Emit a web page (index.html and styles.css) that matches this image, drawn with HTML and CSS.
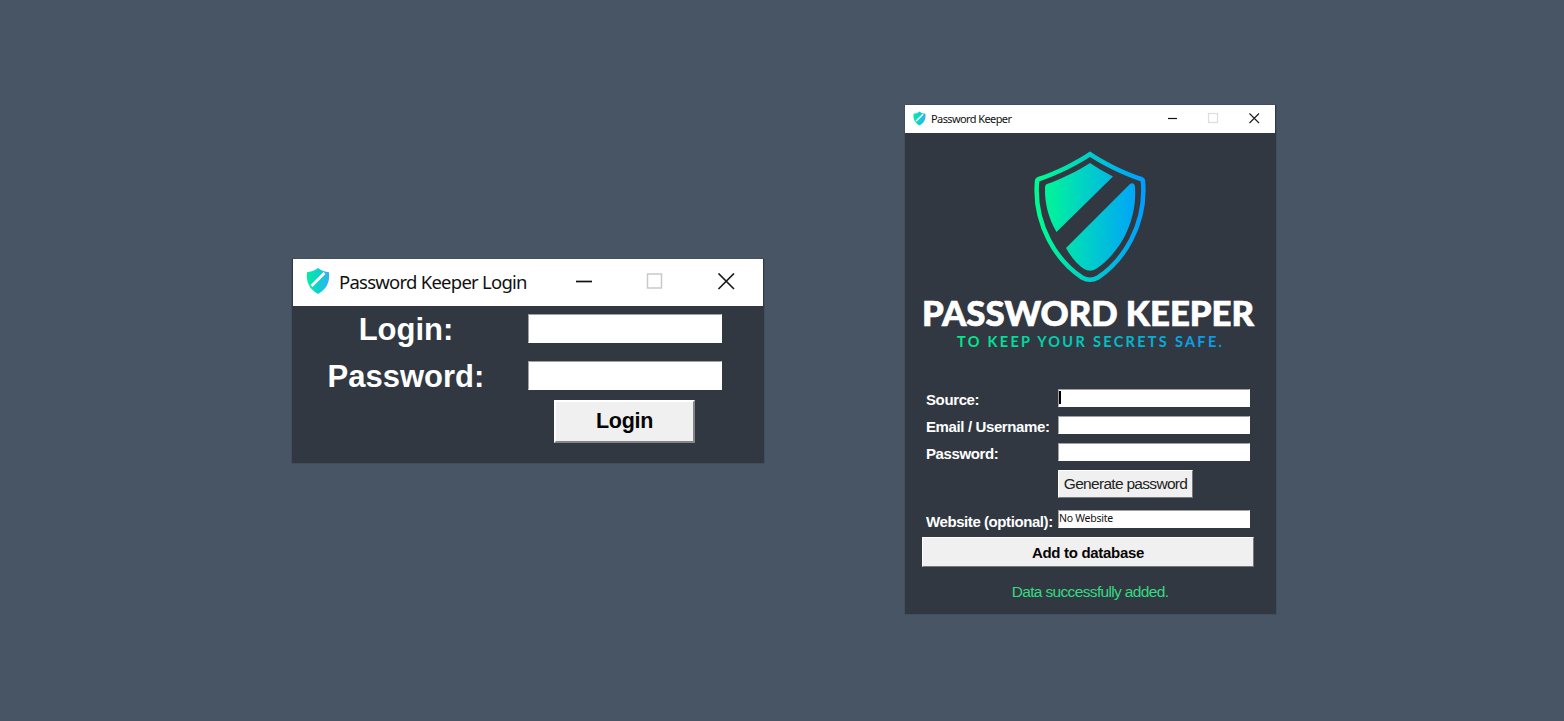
FILE: index.html
```html
<!DOCTYPE html>
<html lang="en">
<head>
<meta charset="utf-8">
<title>Password Keeper</title>
<link rel="stylesheet" href="styles.css">
</head>
<body>
<svg class="defs" width="0" height="0">
  <defs>
    <linearGradient id="brand" gradientUnits="userSpaceOnUse" x1="0" y1="0" x2="112" y2="0"><stop offset=".05" stop-color="#00fa91"/><stop offset=".5" stop-color="#00cdcb"/><stop offset=".97" stop-color="#009fff"/></linearGradient>
    <linearGradient id="tag" gradientUnits="userSpaceOnUse" x1="34" y1="0" x2="300" y2="0"><stop offset="0" stop-color="#00ed83"/><stop offset=".5" stop-color="#00c5bd"/><stop offset="1" stop-color="#0b96f5"/></linearGradient>
    <linearGradient id="miniFill"><stop offset="0" stop-color="#05eda0"/><stop offset=".5" stop-color="#0dd2cc"/><stop offset="1" stop-color="#38aef5"/></linearGradient>
    <symbol id="mini" viewBox="0 0 24 26">
      <path d="M12 0C8.500 2.600 5 4 1 4.300C0 14 3 21 12 26C21 21 24 14 23 4.300C19 4 15.500 2.600 12 0Z" fill="url(#miniFill)"/>
      <path d="M5.500 18L18.500 5" stroke="#fff" stroke-width="2.800"/>
    </symbol>
  </defs>
</svg>

<section class="window login">
  <header class="titlebar">
    <svg class="app-icon"><use href="#mini"/></svg>
    <span class="title">Password Keeper Login</span>
    <svg class="controls" viewBox="0 0 160 18" fill="none">
      <path d="M0 8.500H16" stroke="#111" stroke-width="1.700"/>
      <rect x="71.500" y="1" width="14" height="14" stroke="#c9c9c9" stroke-width="1.500"/>
      <path d="M142.500 .5L158 16M158 .5L142.500 16" stroke="#1c1c1c" stroke-width="1.700"/>
    </svg>
  </header>
  <form class="login-form">
    <span class="label">Login:</span><div class="entry"></div>
    <span class="label">Password:</span><div class="entry"></div>
    <button type="button" class="btn">Login</button>
  </form>
</section>

<section class="window keeper">
  <header class="titlebar">
    <svg class="app-icon"><use href="#mini"/></svg>
    <span class="title">Password Keeper</span>
    <svg class="controls" viewBox="0 0 92 12" fill="none">
      <path d="M0 6.500H9" stroke="#111" stroke-width="1.200"/>
      <rect x="40.500" y="1.500" width="9" height="9" stroke="#ddd" stroke-width="1.200"/>
      <path d="M81.500 1.500L91 11M91 1.500L81.500 11" stroke="#222" stroke-width="1.200"/>
    </svg>
  </header>
  <div class="keeper-body">
    <svg class="shield" viewBox="0 0 112 132">
      <path d="M56 3.200C45 11 22 22.500 5 28C3.500 28.500 3 29 3 31C-.5 74 23 110 48 126.500Q56 131 64 126.500C89 110 112.500 74 109 31C109 29 108.500 28.500 107 28C90 22.500 67 11 56 3.200Z" fill="none" stroke="url(#brand)" stroke-width="4.500"/>
      <path d="M56 12C44 20 26 28.500 13 33Q11 33.500 11 37C10.500 53 15 68 22.500 81L79 25.500C71 21.500 63 16.500 56 12Z" fill="url(#brand)"/>
      <path d="M32 97L96 33C98 31.500 100.500 32.500 101 35.500C103.500 70 86 102 62 118Q56 121.500 50 118C43 113 37 106 32 97Z" fill="url(#brand)"/>
    </svg>
    <svg class="wordmark" viewBox="0 0 334 60">
      <text class="brand-name" x="0" y="33" textLength="332" lengthAdjust="spacingAndGlyphs">PASSWORD KEEPER</text>
      <text class="tagline" x="35" y="53.500" textLength="265">TO KEEP YOUR SECRETS SAFE.</text>
    </svg>
    <form class="keeper-form">
      <span class="label">Source:</span><div class="entry"><i class="caret"></i></div>
      <span class="label">Email / Username:</span><div class="entry"></div>
      <span class="label">Password:</span><div class="entry"></div>
      <button type="button" class="btn generate">Generate password</button>
      <span class="label site">Website (optional):</span><div class="entry site-entry">No Website</div>
      <button type="button" class="btn add">Add to database</button>
    </form>
    <p class="status">Data successfully added.</p>
  </div>
</section>
</body>
</html>
```
FILE: styles.css
```css
* { box-sizing: border-box; }
body { margin: 0; height: 721px; background: #485565; overflow: hidden; position: relative; font-family: "Liberation Sans", Arial, sans-serif; }
.defs { position: absolute; }
.window { position: absolute; background: #313841; box-shadow: 0 0 1px #293039; }
.titlebar { background: #fff; display: flex; align-items: center; }
.title { font-family: "Noto Sans", "Open Sans", sans-serif; color: #111; white-space: nowrap; }
.controls { margin-left: auto; }
.entry { background: #fff; border: 1px solid #fff; border-top-color: #a0a0a0; border-left-color: #a0a0a0; }
.btn { background: #f0f0f0; border: 1px solid #fff; border-right-color: #777; border-bottom-color: #777; padding: 0; margin: 0; border-radius: 0; font-family: inherit; color: #050505; white-space: nowrap; }
.label { color: #fff; font-weight: bold; white-space: nowrap; }

.login { left: 292px; top: 259px; width: 472px; height: 204px; }
.login .titlebar { height: 47px; margin: 0 1px; padding: 0 27px 0 13px; }
.login .app-icon { width: 24px; height: 26px; margin: 0 9px 3px 0; }
.login .title { font-size: 18.500px; letter-spacing: -.75px; margin-bottom: 2px; }
.login .controls { width: 160px; height: 18px; margin-bottom: 2px; }
.login-form { display: grid; grid-template-columns: 228px 194px; gap: 17px 8px; grid-template-rows: 30px 30px 43px; padding-top: 8px; }
.login .label { font-size: 31px; line-height: 32px; text-align: center; }
.login .entry { height: 29px; }
.login .btn { grid-column: 2; width: 141px; height: 43px; margin: -8px 0 0 26px; border-width: 2px; border-right-color: #858585; border-bottom-color: #858585; font-size: 21.500px; letter-spacing: -.3px; font-weight: bold; }

.keeper { left: 905px; top: 105px; width: 371px; height: 509px; }
.keeper .titlebar { height: 28px; margin-right: 1px; padding: 0 15px 0 8px; }
.keeper .app-icon { width: 13px; height: 15px; margin: 0 5px 2px 0; }
.keeper .title { font-size: 11px; letter-spacing: -.6px; margin-bottom: 2px; }
.keeper .controls { width: 92px; height: 12px; margin-bottom: 2px; }
.keeper-body { display: flex; flex-direction: column; padding: 18px 0 0 17px; }
.shield { width: 112px; height: 132px; margin-left: 112px; flex: none; }
.wordmark { width: 334px; height: 60px; margin-top: 10px; overflow: visible; flex: none; }
.brand-name { font: 900 33.500px Lato, sans-serif; fill: #fff; stroke: #fff; stroke-width: .7px; }
.tagline { font: bold 14.500px Lato, sans-serif; fill: url(#tag); }
.keeper-form { display: grid; grid-template-columns: 136px 192px; grid-template-rows: 27px 27px 27px 40px 27px 30px; margin-top: 36px; }
.keeper .label { font-size: 15px; line-height: 20px; padding: 1px 0 0 4px; letter-spacing: -.38px; }
.keeper .site { padding-top: 2px; letter-spacing: -.42px; }
.keeper .entry { height: 18px; }
.caret { display: block; width: 1.500px; height: 13px; background: #000; margin-top: 1px; }
.generate { grid-column: 2; width: 135px; height: 28px; font-size: 15.500px; letter-spacing: -.7px; color: #222; }
.site-entry { font: 10.500px/15px "Noto Sans", "Open Sans", sans-serif; letter-spacing: -.25px; color: #111; }
.add { grid-column: 1 / 3; width: 332px; height: 30px; font-size: 15px; letter-spacing: -.3px; font-weight: bold; }
.status { margin: 15px 0 0; width: 336px; text-align: center; font-size: 15.500px; line-height: 20px; letter-spacing: -.65px; color: #36d983; }
```
